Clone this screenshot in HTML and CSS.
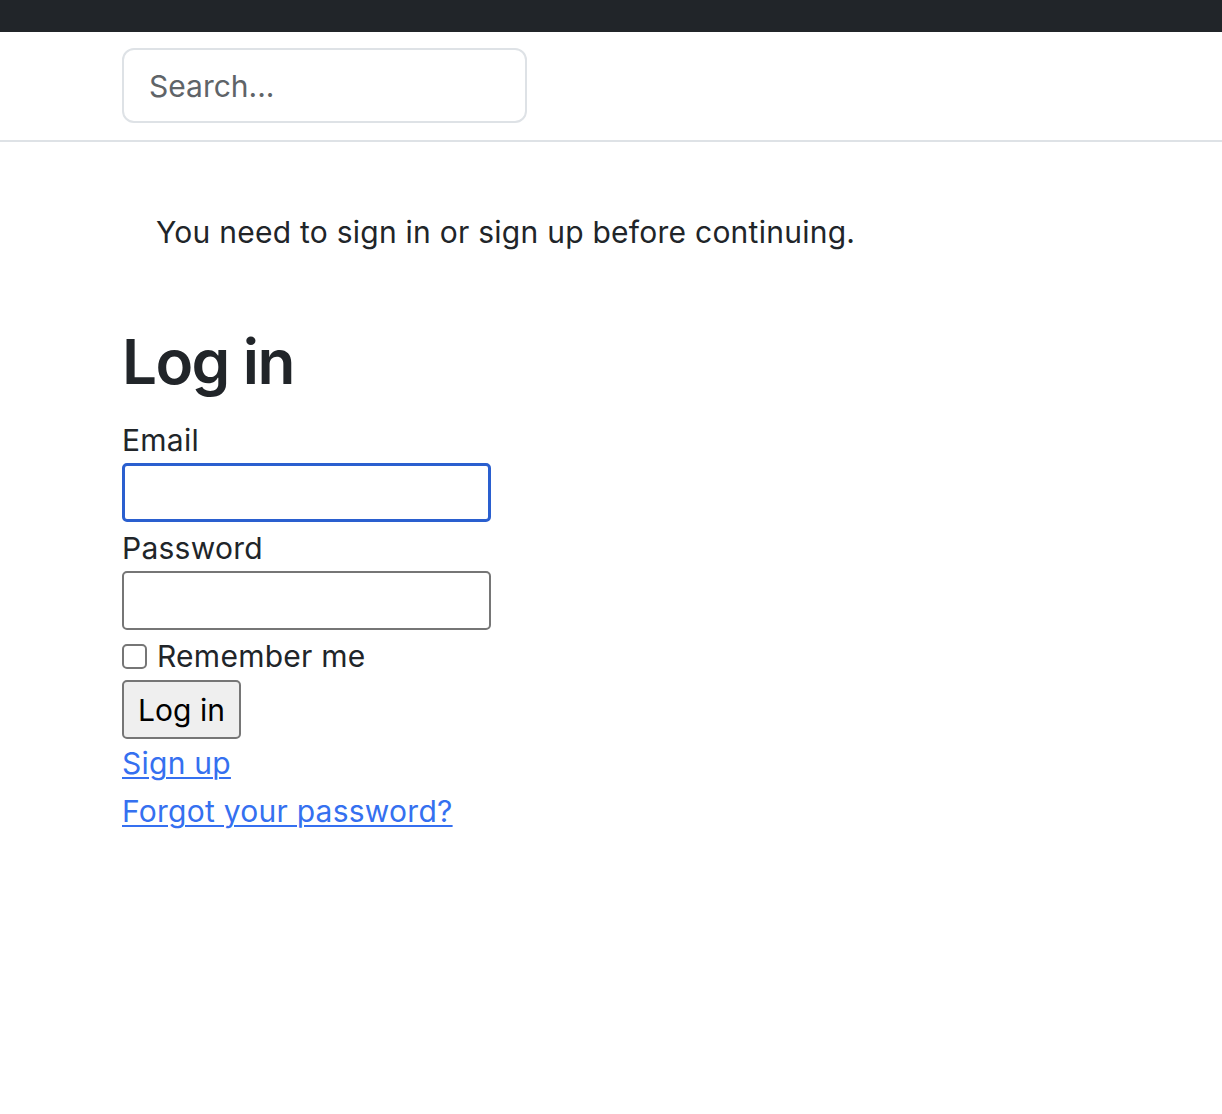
FILE: index.html
```html
<!DOCTYPE html>
<html lang="en">
<head>
<meta charset="utf-8">
<title>Log in</title>
<link rel="stylesheet" href="styles.css">
</head>
<body>
<header class="topbar"></header>
<nav class="searchbar">
  <div class="container">
    <input class="search" type="text" placeholder="Search...">
  </div>
</nav>
<main class="container">
  <p class="notice">You need to sign in or sign up before continuing.</p>
  <h2 class="title">Log in</h2>
  <form class="login">
    <div class="field">
      <label class="label" for="email">Email</label>
      <input class="input input-focus" id="email" type="email">
    </div>
    <div class="field">
      <label class="label" for="password">Password</label>
      <input class="input" id="password" type="password">
    </div>
    <div class="check-row">
      <span class="checkbox"></span>
      <label class="check-label">Remember me</label>
    </div>
    <div class="actions">
      <button class="btn" type="button">Log in</button>
    </div>
  </form>
  <div class="links">
    <a class="link" href="#">Sign up</a>
    <a class="link" href="#">Forgot your password?</a>
  </div>
</main>
</body>
</html>
```
FILE: styles.css
```css
* { box-sizing: border-box; }
html, body { margin: 0; padding: 0; background: #fff; }
body {
  font-family: Inter, "Noto Sans", "Liberation Sans", sans-serif;
  font-size: 30px;
  line-height: 45px;
  letter-spacing: 0.25px;
  color: #212529;
}
.topbar { height: 32px; background: #212529; }
.container { width: 978px; margin: 0 auto; }
.searchbar {
  padding: 16px 0 17px;
  border-bottom: 2px solid #dee2e6;
}
.search {
  display: block;
  width: 405px;
  height: 75px;
  border: 2px solid #dee2e6;
  border-radius: 12px;
  padding: 0 0 0 25px;
  font-family: inherit;
  font-size: 30px;
  color: #212529;
  outline: none;
  background: #fff;
}
.search::placeholder { color: #5f6468; opacity: 1; }
.notice {
  margin: 68px 0 0;
  padding-left: 34px;
  line-height: 45px;
}
.title {
  margin: 70px 0 0;
  font-size: 62px;
  font-weight: 600;
  letter-spacing: -1.6px;
  line-height: 74px;
}
.login { margin-top: 19px; }
.field { margin-bottom: 4px; }
.label { display: block; line-height: 45px; }
.input {
  display: block;
  width: 369px;
  height: 59px;
  border: 2px solid #767676;
  border-radius: 5px;
  background: #fff;
  font-family: inherit;
  font-size: 30px;
  outline: none;
}
.input-focus { border: 3px solid #2a5fcf; }
.check-row {
  display: flex;
  align-items: center;
  gap: 10px;
  height: 45px;
  margin-top: 3px;
}
.checkbox {
  width: 25px;
  height: 25px;
  border: 2px solid #767676;
  border-radius: 5px;
  background: #fff;
  flex: none;
}
.check-label { line-height: 45px; }
.actions { margin-top: 1px; }
.btn {
  display: block;
  width: 119px;
  height: 59px;
  padding: 0;
  border: 2px solid #767676;
  border-radius: 5px;
  background: #efefef;
  color: #000;
  font-family: inherit;
  font-size: 30px;
}
.links { display: flex; flex-direction: column; align-items: flex-start; gap: 3px; margin-top: 2px; }
.link {
  color: #3570f0;
  line-height: 45px;
  text-decoration: underline;
  text-decoration-thickness: 2px;
  text-underline-offset: 3px;
}
```
